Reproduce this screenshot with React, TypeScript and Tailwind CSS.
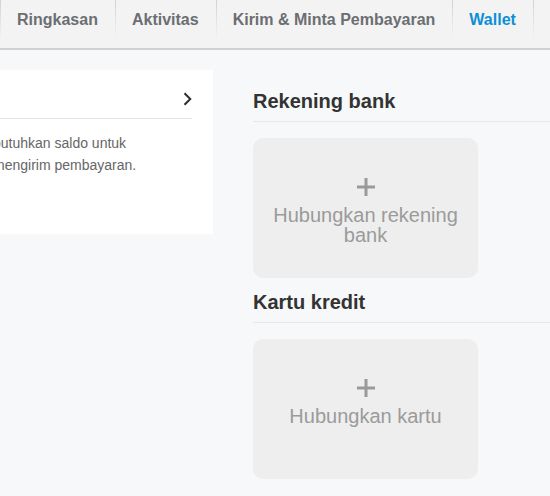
const tabs = [
  { label: "Ringkasan", active: false },
  { label: "Aktivitas", active: false },
  { label: "Kirim & Minta Pembayaran", active: false },
  { label: "Wallet", active: true },
];

function Plus() {
  return (
    <svg width="18" height="18" viewBox="0 0 18 18" aria-hidden>
      <rect x="7.5" y="0" width="3" height="18" fill="#9a9a9a" />
      <rect x="0" y="7.5" width="18" height="3" fill="#9a9a9a" />
    </svg>
  );
}

function LinkCard({ lines }: { lines: string[] }) {
  return (
    <div className="flex h-[140px] w-[225px] flex-col items-center rounded-[10px] bg-[#eeeeee] pt-[40px]">
      <Plus />
      <div className="mt-[9px] text-center text-[20px] leading-[20px] text-[#9b9b9b]">
        {lines.map((l) => (
          <div key={l}>{l}</div>
        ))}
      </div>
    </div>
  );
}

function Section({ title, children }: { title: string; children: React.ReactNode }) {
  return (
    <div>
      <h2 className="border-b border-[#e6e8eb] pb-[8px] text-[20px] font-bold leading-[24px] text-[#333333]">
        {title}
      </h2>
      <div className="mt-[16px]">{children}</div>
    </div>
  );
}

function TabDivider() {
  return <div className="h-[40px] w-px shrink-0 bg-gradient-to-b from-[#d2d2d2] to-transparent" />;
}

export default function App() {
  return (
    <div
      className="h-[496px] w-[550px] overflow-hidden bg-[#f7f8fa]"
      style={{ fontFamily: '"Liberation Sans", Arial, sans-serif' }}
    >
      {/* Top tab bar */}
      <nav className="flex h-[50px] border-b-2 border-[#ccd2d6] bg-[#f3f3f3]">
        <TabDivider />
        {tabs.map((t) => (
          <div key={t.label} className="flex h-[40px]">
            <div
              className={
                "flex items-center pl-[16px] pr-[17px] text-[16px] font-bold " +
                (t.active ? "text-[#0c8fd6]" : "text-[#6b6e72]")
              }
            >
              {t.label}
            </div>
            <TabDivider />
          </div>
        ))}
      </nav>

      <div className="flex gap-[40px]">
        {/* Left balance card, cropped at the page edge */}
        <div className="ml-[-27px] mt-[20px] h-[164px] w-[240px] shrink-0 bg-white pl-[20px] pr-[21px]">
          <div className="flex justify-end border-b border-[#e5e5e5] pt-[22px] pb-[12px]">
            <svg width="9" height="14" viewBox="0 0 9 14" aria-hidden>
              <path d="M1.5 1.2 L7.3 7 L1.5 12.8" fill="none" stroke="#2c2e2f" strokeWidth="2" />
            </svg>
          </div>
          <p className="pt-[13px] text-[14px] leading-[22px] text-[#666666]">
            butuhkan saldo untuk
            <br />
            mengirim pembayaran.
          </p>
        </div>

        {/* Right column */}
        <div className="mt-[39px] w-[320px] shrink-0">
          <Section title="Rekening bank">
            <LinkCard lines={["Hubungkan rekening", "bank"]} />
          </Section>
          <div className="mt-[12px]">
            <Section title="Kartu kredit">
              <LinkCard lines={["Hubungkan kartu"]} />
            </Section>
          </div>
        </div>
      </div>
    </div>
  );
}
